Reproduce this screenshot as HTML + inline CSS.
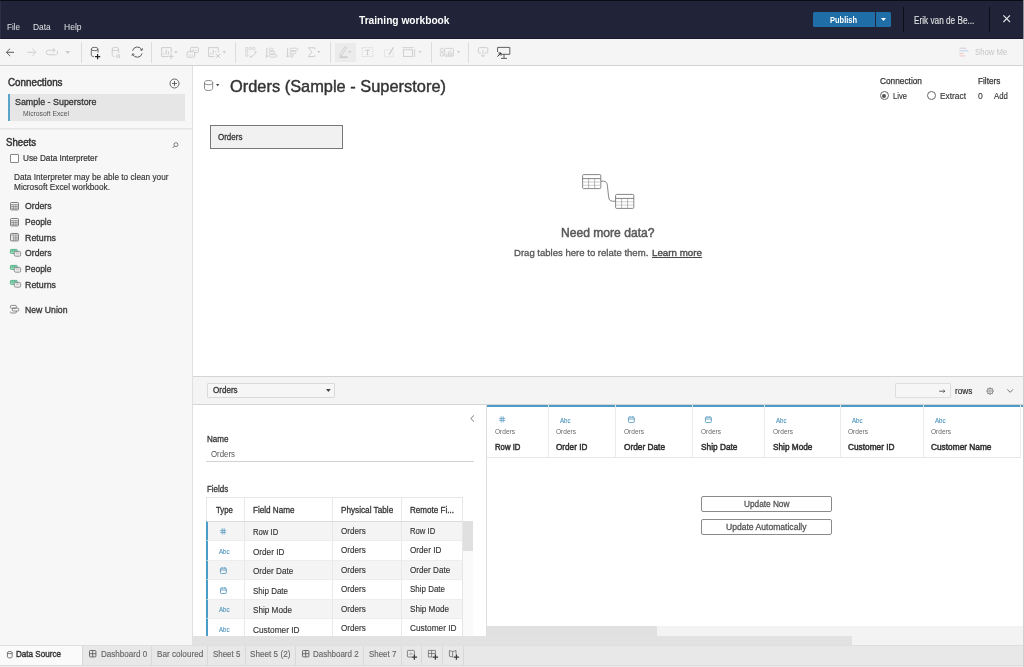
<!DOCTYPE html>
<html lang="en">
<head>
<meta charset="utf-8">
<title>Training workbook</title>
<style>
*{box-sizing:border-box;margin:0;padding:0}
html,body{width:1024px;height:667px;overflow:hidden;background:#fff}
body{font-family:"Liberation Sans",sans-serif;color:#333;font-size:9px;position:relative}
.a{position:absolute}
.t{position:absolute;white-space:nowrap;line-height:1;transform-origin:0 50%}
#txt{position:absolute;left:0;top:0;width:1024px;height:667px;will-change:transform}
svg{position:absolute;overflow:visible}
.sep{position:absolute;width:1px;background:#dcdcdc;top:41.5px;height:21.5px}
.dd{position:absolute;width:0;height:0;border-left:2.2px solid transparent;border-right:2.2px solid transparent;border-top:2.6px solid #c4c4c4}
.tsep{position:absolute;top:646px;width:1px;height:19px;background:#d8d8d8}
.vl{position:absolute;width:1px;background:#e4e4e4}
.hl{position:absolute;height:1px;background:#e4e4e4}
</style>
</head>
<body>
<!-- ===== TOP BAR ===== -->
<div class="a" style="left:0;top:0;width:1024px;height:39px;background:#212438"></div>
<div class="a" style="left:0;top:0;width:1024px;height:1px;background:#0a0b17"></div>
<div class="a" style="left:0;top:38px;width:1024px;height:1px;background:#181a2c"></div>
<div class="a" style="left:0;top:1px;width:1px;height:38px;background:#2d3044"></div>
<div class="a" style="left:812.6px;top:11.8px;width:62.6px;height:15.4px;background:#1f6ea7;border-radius:1.5px 0 0 1.5px"></div>
<div class="a" style="left:876.1px;top:11.8px;width:14.9px;height:15.4px;background:#1f6ea7;border-radius:0 1.5px 1.5px 0"></div>
<svg style="left:881.2px;top:18.4px" width="5" height="3" viewBox="0 0 5 3"><path d="M0 0h5l-2.5 3z" fill="#fff"/></svg>
<div class="a" style="left:903px;top:7px;width:1px;height:25px;background:#0c0d17"></div>
<div class="a" style="left:989px;top:7px;width:1px;height:25px;background:#0c0d17"></div>
<svg style="left:1003px;top:15.3px" width="7.4" height="7.4" viewBox="0 0 7.4 7.4"><path d="M0.4 0.4L7 7M7 0.4L0.4 7" stroke="#e4e4e8" stroke-width="1.1" fill="none"/></svg>

<!-- ===== TOOLBAR ===== -->
<div class="a" style="left:0;top:39px;width:1024px;height:27px;background:#f5f5f5;border-bottom:1px solid #d2d2d2"></div>

<div class="sep" style="left:81px"></div>
<div class="sep" style="left:151px"></div>
<div class="sep" style="left:235px"></div>
<div class="sep" style="left:330px"></div>
<div class="sep" style="left:431px"></div>
<div class="sep" style="left:468px"></div>
<div class="a" style="left:335px;top:42.6px;width:21px;height:19px;background:#ebebeb"></div>
<svg style="left:0;top:0" width="1024" height="70" viewBox="0 0 1024 70" fill="none" stroke-linecap="butt">
 <!-- back / fwd / redo -->
 <path d="M14 52.3H6.6M10.2 48.6L6.4 52.3l3.8 3.7" stroke="#4a4a4a" stroke-width="0.9"/>
 <path d="M27.4 52.3h8.2M32.2 48.6l3.8 3.7-3.8 3.7" stroke="#cbcbcb" stroke-width="0.9"/>
 <path d="M55 50.2h-6.4a2.3 2.3 0 0 0 0 4.6h6.8a2.3 2.3 0 0 0 1.6-3.9M52.8 48l2.4 2.2-2.4 2.2" stroke="#cbcbcb" stroke-width="0.9"/>
 <path d="M65.4 51h4.8l-2.4 3z" fill="#cbcbcb" stroke="none"/>
 <!-- db plus -->
 <path d="M91.3 49v6.2c0 .8 1.2 1.3 2.6 1.4M98 49v3.6" stroke="#555" stroke-width="0.85"/>
 <ellipse cx="94.65" cy="49" rx="3.35" ry="1.7" stroke="#555" stroke-width="0.85"/>
 <path d="M97.6 54v5.2M95 56.6h5.2" stroke="#222" stroke-width="1.2"/>
 <!-- db pause -->
 <path d="M112.2 49v6.2c0 .8 1.2 1.3 2.6 1.4M118.6 49v4" stroke="#cbcbcb" stroke-width="0.9"/>
 <ellipse cx="115.4" cy="49" rx="3.2" ry="1.7" stroke="#cbcbcb" stroke-width="0.9"/>
 <path d="M116.8 54.3v3.8M118.2 54.3v3.8M119.5 54.3v3.8" stroke="#cbcbcb" stroke-width="0.8"/>
 <!-- refresh -->
 <path d="M132.5 50.8a5 5 0 0 1 9.4-.9M142.1 53.4a5 5 0 0 1-9.4.9" stroke="#505050" stroke-width="0.9"/>
 <path d="M142.6 48.4l-.5 1.9-1.9-.5M132 55.8l.5-1.9 1.9.5" stroke="#505050" stroke-width="0.9"/>
 <!-- new worksheet -->
 <path d="M168 56.6h-6.4V47.6h9.6v5.6" stroke="#cbcbcb" stroke-width="0.9"/>
 <path d="M163.8 54.6v-1.8M166.2 54.6v-5M168.4 54.6v-3.4" stroke="#cbcbcb" stroke-width="0.9"/>
 <path d="M171 53.6v5.4M168.3 56.3h5.4" stroke="#cbcbcb" stroke-width="1"/>
 <path d="M174.2 51.3h3.4l-1.7 2.2z" fill="#cbcbcb" stroke="none"/>
 <!-- duplicate -->
 <rect x="190.6" y="47.4" width="7.8" height="5.2" rx="0.8" stroke="#cbcbcb" stroke-width="0.9"/>
 <path d="M193.2 51.4v-2.4M195.8 51.4v-1.6" stroke="#cbcbcb" stroke-width="0.9"/>
 <rect x="187" y="51.8" width="7.6" height="5.4" rx="0.8" stroke="#cbcbcb" stroke-width="0.9" fill="#f5f5f5"/>
 <path d="M189 55.6v-1M190.8 55.6v-1M192.6 55.6v-1" stroke="#cbcbcb" stroke-width="0.9"/>
 <!-- clear -->
 <path d="M214.6 56.6h-6V47.6h9.6v5" stroke="#cbcbcb" stroke-width="0.9"/>
 <path d="M210.8 54.6v-1.8M213.2 54.6v-5M215.4 52v-1" stroke="#cbcbcb" stroke-width="0.9"/>
 <path d="M215.8 53.8l4.4 4.2M220.2 53.8l-4.4 4.2" stroke="#cbcbcb" stroke-width="1"/>
 <path d="M222.6 51.3h3.4l-1.7 2.2z" fill="#cbcbcb" stroke="none"/>
 
 <!-- swap -->
 <rect x="245.5" y="47.5" width="2.3" height="2.1" rx="0.6" stroke="#cbcbcb" stroke-width="0.7"/><rect x="249.1" y="47.5" width="2.3" height="2.1" rx="0.6" stroke="#cbcbcb" stroke-width="0.7"/><rect x="252.7" y="47.5" width="2.3" height="2.1" rx="0.6" stroke="#cbcbcb" stroke-width="0.7"/><rect x="245.5" y="50.7" width="2.3" height="2.1" rx="0.6" stroke="#cbcbcb" stroke-width="0.7"/><rect x="245.5" y="54.2" width="2.3" height="2.1" rx="0.6" stroke="#cbcbcb" stroke-width="0.7"/>
 <path d="M255.6 51.2c0 3-2.4 5.4-5.6 5.6M254.4 52.4l1.2-1.4 1.2 1.4M251.2 55.6l-1.4 1.2 1.4 1.2" stroke="#cbcbcb" stroke-width="0.8"/>
 <!-- sort asc -->
 <path d="M266.8 47.8v9M265.2 55.6l1.6 1.6 1.6-1.6" stroke="#cbcbcb" stroke-width="0.9"/>
 <rect x="269.2" y="48.2" width="3.8" height="2.4" rx="1.2" stroke="#cbcbcb" stroke-width="0.8"/>
 <rect x="269.2" y="51.4" width="5.8" height="2.4" rx="1.2" stroke="#cbcbcb" stroke-width="0.8"/>
 <rect x="269.2" y="54.7" width="7.8" height="2.4" rx="1.2" stroke="#cbcbcb" stroke-width="0.8"/>
 <!-- sort desc -->
 <path d="M287.6 47.8v9M286 55.6l1.6 1.6 1.6-1.6" stroke="#cbcbcb" stroke-width="0.9"/>
 <rect x="290" y="48.2" width="7.8" height="2.4" rx="1.2" stroke="#cbcbcb" stroke-width="0.8"/>
 <rect x="290" y="51.4" width="5.8" height="2.4" rx="1.2" stroke="#cbcbcb" stroke-width="0.8"/>
 <rect x="290" y="54.7" width="3.2" height="2.4" rx="1.2" stroke="#cbcbcb" stroke-width="0.8"/>
 <!-- sigma -->
 <path d="M314.8 49.4V47.8h-6.6l3.8 4.4-3.8 4.4h6.6v-1.6" stroke="#cbcbcb" stroke-width="0.9"/>
 <path d="M317.2 51h3.2l-1.6 2.2z" fill="#cbcbcb" stroke="none"/>
 <!-- highlight pen -->
 <path d="M345 46.6l1.6.8-4.6 7.8-2 .6.4-2z" stroke="#cbcbcb" stroke-width="0.8"/>
 <path d="M339.6 57.1h8" stroke="#b4b4b4" stroke-width="1"/>
 <path d="M348.4 51h3l-1.5 2.2z" fill="#cbcbcb" stroke="none"/>
 <!-- T box -->
 <rect x="362.2" y="47.6" width="10.6" height="9" stroke="#cbcbcb" stroke-width="0.8" stroke-dasharray="1 1"/>
 <path d="M365 50.2h5M367.5 50.2v4.4M366.4 54.6h2.2" stroke="#cbcbcb" stroke-width="0.9"/>
 <!-- annotate -->
 <path d="M389.6 49.8h-5v7h8.6v-4.6" stroke="#cbcbcb" stroke-width="0.8" stroke-dasharray="1 1"/>
 <path d="M393.4 47.4l-3.6 6.2-.6 1.4" stroke="#cbcbcb" stroke-width="1.2"/>
 <!-- fit -->
 <path d="M403.2 47.6h9.6M403.2 47v1.2M412.8 47v1.2" stroke="#cbcbcb" stroke-width="0.8"/>
 <rect x="403.4" y="49.8" width="9.2" height="6.6" stroke="#cbcbcb" stroke-width="0.9"/>
 <path d="M414 49.8h1.2M414 56.4h1.2M414.6 49.8v6.6" stroke="#cbcbcb" stroke-width="0.8"/>
 <path d="M418.4 51h3l-1.5 2.2z" fill="#cbcbcb" stroke="none"/>
 <!-- show cards -->
 <rect x="440.3" y="48.4" width="3" height="3.6" rx="1.2" stroke="#cbcbcb" stroke-width="0.8"/>
 <rect x="440.3" y="52.6" width="3" height="3.6" rx="1.2" stroke="#cbcbcb" stroke-width="0.8"/>
 <rect x="444.6" y="48.4" width="8.8" height="7.8" rx="0.8" stroke="#cbcbcb" stroke-width="0.8"/>
 <path d="M446.6 56v-2.2M448.4 56v-4.4M450.2 56v-5.6M451.8 56v-3.4" stroke="#cbcbcb" stroke-width="0.8"/>
 <path d="M457 51h3l-1.5 2.2z" fill="#cbcbcb" stroke="none"/>
 <!-- download -->
 <path d="M481 53h-1.6a1 1 0 0 1-1-1v-3.4a1 1 0 0 1 1-1h7.4a1 1 0 0 1 1 1V52a1 1 0 0 1-1 1H485" stroke="#cbcbcb" stroke-width="0.9"/>
 <path d="M483 50v6.6M481.4 55.2l1.6 1.6 1.6-1.6" stroke="#cbcbcb" stroke-width="0.9"/>
 <!-- presentation -->
 <path d="M501.6 54.3h8.2V47.4H497.6v4.6" stroke="#505050" stroke-width="0.9"/>
 <path d="M504 54.3v3.8M501 58.4h6" stroke="#4a4a4a" stroke-width="0.9"/>
 <path d="M497.4 56.4l3.4-3.2M498.4 53h2.6v2.6" stroke="#222" stroke-width="1"/>
 <!-- show me -->
 <path d="M959.4 48.3h7" stroke="#d9d3e0" stroke-width="1.3"/>
 <path d="M959.4 50.7h9" stroke="#c9dcea" stroke-width="1.3"/>
 <path d="M959.4 53.5h4.4" stroke="#f3cfcf" stroke-width="1.3"/>
 <path d="M959.4 55.9h5.6" stroke="#f3cfcf" stroke-width="1.3"/>

</svg>


<!-- ===== LEFT PANEL ===== -->
<div class="a" style="left:0;top:66px;width:193px;height:580px;background:#f7f7f7;border-right:1px solid #e0e0e0"></div>

<svg style="left:169px;top:78px" width="11" height="11" viewBox="0 0 11 11"><circle cx="5.5" cy="5.5" r="4.5" fill="none" stroke="#555" stroke-width="0.9"/><path d="M5.5 3v5M3 5.5h5" stroke="#555" stroke-width="0.9"/></svg>
<div class="a" style="left:8px;top:94px;width:177px;height:27px;background:#e6e6e6;border-left:2px solid #5ba3cb"></div>
<div class="a" style="left:0;top:128px;width:192px;height:1px;background:#e6e6e6"></div><div class="a" style="left:0;top:129px;width:192px;height:1px;background:#eeeeee"></div>
<svg style="left:171.8px;top:141.6px" width="6.6" height="6.6" viewBox="0 0 8 8"><circle cx="4.8" cy="3.2" r="2.4" fill="none" stroke="#555" stroke-width="0.9"/><path d="M3 5L0.8 7.2" stroke="#555" stroke-width="1"/></svg>
<div class="a" style="left:9.6px;top:153.6px;width:9.4px;height:9.2px;background:#fff;border:1px solid #868686;border-radius:1px"></div>

<svg style="left:10px;top:202.1px" width="9" height="8.4" viewBox="0 0 9 8.4"><rect x="0.5" y="0.5" width="8" height="7.4" rx="0.9" fill="#f0f0f0" stroke="#707070" stroke-width="0.9"/><path d="M0.5 2.6h8M0.5 4.4h8M0.5 6.2h8M3.3 2.6v5.4M5.9 2.6v5.4" stroke="#808080" stroke-width="0.7" fill="none"/></svg>
<svg style="left:10px;top:217.6px" width="9" height="8.4" viewBox="0 0 9 8.4"><rect x="0.5" y="0.5" width="8" height="7.4" rx="0.9" fill="#f0f0f0" stroke="#707070" stroke-width="0.9"/><path d="M0.5 2.6h8M0.5 4.4h8M0.5 6.2h8M3.3 2.6v5.4M5.9 2.6v5.4" stroke="#808080" stroke-width="0.7" fill="none"/></svg>
<svg style="left:10px;top:233.2px" width="9" height="8.4" viewBox="0 0 9 8.4"><rect x="0.5" y="0.5" width="8" height="7.4" rx="0.9" fill="#f0f0f0" stroke="#707070" stroke-width="0.9"/><path d="M0.5 2h8M3.3 2v6M5.9 2v6M3.3 4.2h5.2M3.3 6h5.2" stroke="#808080" stroke-width="0.7" fill="none"/></svg>
<svg style="left:10px;top:249.1px" width="11.2" height="7.6" viewBox="0 0 11.2 7.6"><rect x="0.4" y="0.4" width="6.8" height="4" rx="0.7" fill="#a6dcc2" stroke="#45ad82" stroke-width="0.8"/><path d="M0.4 2.1h6.8M2.6 0.4v1.7M4.8 0.4v1.7" stroke="#45ad82" stroke-width="0.7"/><rect x="4.3" y="2.4" width="6.4" height="4.8" rx="1.4" fill="#ececec" stroke="#7a7a7a" stroke-width="0.8"/><path d="M6 4.2h3.2" stroke="#999" stroke-width="0.6"/></svg>
<svg style="left:10px;top:264.70000000000005px" width="11.2" height="7.6" viewBox="0 0 11.2 7.6"><rect x="0.4" y="0.4" width="6.8" height="4" rx="0.7" fill="#a6dcc2" stroke="#45ad82" stroke-width="0.8"/><path d="M0.4 2.1h6.8M2.6 0.4v1.7M4.8 0.4v1.7" stroke="#45ad82" stroke-width="0.7"/><rect x="4.3" y="2.4" width="6.4" height="4.8" rx="1.4" fill="#ececec" stroke="#7a7a7a" stroke-width="0.8"/><path d="M6 4.2h3.2" stroke="#999" stroke-width="0.6"/></svg>
<svg style="left:10px;top:280.3px" width="11.2" height="7.6" viewBox="0 0 11.2 7.6"><rect x="0.4" y="0.4" width="6.8" height="4" rx="0.7" fill="#a6dcc2" stroke="#45ad82" stroke-width="0.8"/><path d="M0.4 2.1h6.8M2.6 0.4v1.7M4.8 0.4v1.7" stroke="#45ad82" stroke-width="0.7"/><rect x="4.3" y="2.4" width="6.4" height="4.8" rx="1.4" fill="#ececec" stroke="#7a7a7a" stroke-width="0.8"/><path d="M6 4.2h3.2" stroke="#999" stroke-width="0.6"/></svg>
<svg style="left:10px;top:305.40000000000003px" width="9.2" height="8.4" viewBox="0 0 9.2 8.4"><rect x="0.4" y="0.4" width="6" height="2.8" rx="1" fill="none" stroke="#707070" stroke-width="0.8"/><rect x="2.3" y="3.2" width="6.5" height="2.8" rx="1" fill="none" stroke="#707070" stroke-width="0.8"/><path d="M6.4 6v1.2c0 .5-.4.8-.9.8H1.3c-.5 0-.9-.3-.9-.8V6.6" fill="none" stroke="#707070" stroke-width="0.8"/></svg>

<!-- ===== MAIN ===== -->

<!-- title row -->
<svg style="left:204px;top:80px" width="9.2" height="11" viewBox="0 0 9.2 11"><path d="M0.5 2.6v5.8c0 1.2 1.8 2.1 4.1 2.1s4.1-.9 4.1-2.1V2.6" fill="none" stroke="#7c7c7c" stroke-width="0.9"/><ellipse cx="4.6" cy="2.6" rx="4.1" ry="2.1" fill="none" stroke="#7c7c7c" stroke-width="0.9"/></svg>
<svg style="left:216px;top:84.4px" width="3.4" height="2.2" viewBox="0 0 3.4 2.2"><path d="M0 0h3.4l-1.7 2.2z" fill="#444"/></svg>
<!-- radios -->
<div class="a" style="left:879.6px;top:91px;width:9.2px;height:9.2px;border:1px solid #666;border-radius:50%;background:#fff"></div>
<div class="a" style="left:882.2px;top:93.6px;width:4px;height:4px;border-radius:50%;background:#555"></div>
<div class="a" style="left:927.2px;top:91px;width:9.2px;height:9.2px;border:1px solid #666;border-radius:50%;background:#fff"></div>
<!-- orders box -->
<div class="a" style="left:210px;top:125px;width:132.5px;height:23.6px;background:#f1f1f1;border:1px solid #787878"></div>
<!-- relation icon -->
<svg style="left:582px;top:174px" width="53" height="36" viewBox="0 0 53 36">
 <g fill="none" stroke="#777" stroke-width="0.9">
  <rect x="0.6" y="0.6" width="18.2" height="14" rx="1" fill="#fff"/>
  <path d="M0.6 4.6h18.2" />
  <rect x="33.6" y="20.4" width="18.2" height="14" rx="1" fill="#fff"/>
  <path d="M33.6 24.4h18.2"/>
  <path d="M18.8 7.2h2.6c2.6 0 3.6 1.4 4 4.4l1.2 11.2c.4 3 1.4 4.4 4 4.4h3"/>
 </g>
 <g fill="none" stroke="#b8b8b8" stroke-width="0.7">
  <path d="M0.6 8h18.2M0.6 11.3h18.2"/><path d="M6.6 4.6v10M12.6 4.6v10" stroke="#999"/>
  <path d="M33.6 27.8h18.2M33.6 31.1h18.2"/><path d="M39.6 24.4v10M45.6 24.4v10" stroke="#999"/>
 </g>
</svg>
<!-- lower band -->
<div class="a" style="left:193px;top:376px;width:831px;height:29px;background:#f4f4f4;border-top:1px solid #d4d4d4;border-bottom:1px solid #d4d4d4"></div>
<div class="a" style="left:207.2px;top:383.2px;width:127.5px;height:15.3px;background:#f6f6f6;border:1px solid #dadada;border-radius:1px"></div>
<svg style="left:326px;top:389.2px" width="4.8" height="3" viewBox="0 0 4.8 3"><path d="M0 0h4.8l-2.4 3z" fill="#444"/></svg>
<div class="a" style="left:894.5px;top:383.4px;width:56.3px;height:15px;background:#f6f6f6;border:1px solid #dedede;border-radius:1px"></div>
<svg style="left:938.8px;top:388.9px" width="6.4" height="4.4" viewBox="0 0 6.4 4.4"><path d="M0.2 2.2h5.6M4.4 0.8l1.5 1.4-1.5 1.4" fill="none" stroke="#444" stroke-width="0.85"/></svg>
<svg style="left:986px;top:386.5px" width="8.2" height="8.2" viewBox="0 0 9 9"><circle cx="4.5" cy="4.5" r="3.1" fill="none" stroke="#666" stroke-width="0.8"/><circle cx="4.5" cy="4.5" r="1.3" fill="none" stroke="#666" stroke-width="0.7"/><path d="M4.5 0.4v1M4.5 7.6v1M0.4 4.5h1M7.6 4.5h1M1.6 1.6l.7.7M6.7 6.7l.7.7M1.6 7.4l.7-.7M6.7 2.3l.7-.7" stroke="#666" stroke-width="0.9"/></svg>
<svg style="left:1006.6px;top:388.6px" width="6.4" height="4" viewBox="0 0 6.4 4"><path d="M0.3 0.4l2.9 2.9L6.1 0.4" fill="none" stroke="#555" stroke-width="0.8"/></svg>
<!-- left lower pane -->
<div class="vl" style="left:486px;top:405px;height:231px;background:#dedede"></div>
<svg style="left:470.2px;top:415px" width="4.6" height="7" viewBox="0 0 4.6 7"><path d="M4 0.4L0.8 3.5 4 6.6" fill="none" stroke="#555" stroke-width="0.8"/></svg>
<div class="hl" style="left:206px;top:461px;width:267.5px;background:#d2d2d2"></div>
<div class="a" style="left:206px;top:497px;width:257px;height:139px;border:1px solid #e6e6e6;border-bottom:none;background:#fff"></div>
<div class="a" style="left:206px;top:521px;width:256px;height:19px;background:#f4f4f4;border-left:2px solid #4d9bc7;border-top:1px solid #ededed"></div>
<div class="a" style="left:206px;top:540px;width:256px;height:20px;background:#ffffff;border-left:2px solid #4d9bc7;border-top:1px solid #ededed"></div>
<div class="a" style="left:206px;top:560px;width:256px;height:19px;background:#f4f4f4;border-left:2px solid #4d9bc7;border-top:1px solid #ededed"></div>
<div class="a" style="left:206px;top:579px;width:256px;height:20px;background:#ffffff;border-left:2px solid #4d9bc7;border-top:1px solid #ededed"></div>
<div class="a" style="left:206px;top:599px;width:256px;height:19px;background:#f4f4f4;border-left:2px solid #4d9bc7;border-top:1px solid #ededed"></div>
<div class="a" style="left:206px;top:618px;width:256px;height:18px;background:#ffffff;border-left:2px solid #4d9bc7;border-top:1px solid #ededed"></div>
<div class="vl" style="left:244px;top:498px;height:138px;background:#e9e9e9"></div>
<div class="vl" style="left:332px;top:498px;height:138px;background:#e9e9e9"></div>
<div class="vl" style="left:401px;top:498px;height:138px;background:#e9e9e9"></div>
<div class="hl" style="left:207px;top:520.6px;width:255px;background:#dcdcdc"></div>
<svg style="left:220.10px;top:528.20px" width="6.4" height="6.8" viewBox="0 0 6.4 6.8"><path d="M2.2 0.3v6.2M4.2 0.3v6.2M0.2 2.4h6M0.2 4.4h6" stroke="#4b93bb" stroke-width="0.7" fill="none"/></svg>
<svg style="left:219.90px;top:567.40px" width="6.8" height="7" viewBox="0 0 6.8 7"><rect x="0.45" y="1.1" width="5.9" height="5.4" rx="0.9" fill="none" stroke="#4b93bb" stroke-width="0.8"/><path d="M0.45 3h5.9M2 0.2v1.4M4.8 0.2v1.4" stroke="#4b93bb" stroke-width="0.8" fill="none"/></svg>
<svg style="left:219.90px;top:586.95px" width="6.8" height="7" viewBox="0 0 6.8 7"><rect x="0.45" y="1.1" width="5.9" height="5.4" rx="0.9" fill="none" stroke="#4b93bb" stroke-width="0.8"/><path d="M0.45 3h5.9M2 0.2v1.4M4.8 0.2v1.4" stroke="#4b93bb" stroke-width="0.8" fill="none"/></svg>
<div class="a" style="left:463px;top:521px;width:9.6px;height:115px;background:#fafafa"></div>
<div class="a" style="left:463px;top:521px;width:9.6px;height:29.5px;background:#e0e0e0"></div>

<div class="a" style="left:487px;top:404.5px;width:536px;height:2.2px;background:#4d9bc7"></div>
<div class="hl" style="left:487px;top:457px;width:533px;background:#e6e6e6"></div>
<div class="vl" style="left:548px;top:404.5px;height:53px;background:#ebebeb"></div>
<div class="vl" style="left:615.3px;top:404.5px;height:53px;background:#ebebeb"></div>
<div class="vl" style="left:692.3px;top:404.5px;height:53px;background:#ebebeb"></div>
<div class="vl" style="left:764.3px;top:404.5px;height:53px;background:#ebebeb"></div>
<div class="vl" style="left:840.4px;top:404.5px;height:53px;background:#ebebeb"></div>
<div class="vl" style="left:923px;top:404.5px;height:53px;background:#ebebeb"></div>
<div class="vl" style="left:1020px;top:404.5px;height:53px;background:#ebebeb"></div>
<svg style="left:499.00px;top:416.40px" width="6.4" height="6.8" viewBox="0 0 6.4 6.8"><path d="M2.2 0.3v6.2M4.2 0.3v6.2M0.2 2.4h6M0.2 4.4h6" stroke="#4b93bb" stroke-width="0.7" fill="none"/></svg>
<svg style="left:627.80px;top:416.30px" width="6.8" height="7" viewBox="0 0 6.8 7"><rect x="0.45" y="1.1" width="5.9" height="5.4" rx="0.9" fill="none" stroke="#4b93bb" stroke-width="0.8"/><path d="M0.45 3h5.9M2 0.2v1.4M4.8 0.2v1.4" stroke="#4b93bb" stroke-width="0.8" fill="none"/></svg>
<svg style="left:704.80px;top:416.30px" width="6.8" height="7" viewBox="0 0 6.8 7"><rect x="0.45" y="1.1" width="5.9" height="5.4" rx="0.9" fill="none" stroke="#4b93bb" stroke-width="0.8"/><path d="M0.45 3h5.9M2 0.2v1.4M4.8 0.2v1.4" stroke="#4b93bb" stroke-width="0.8" fill="none"/></svg>

<!-- buttons -->
<div class="a" style="left:701px;top:496.2px;width:130.6px;height:15.5px;border:1px solid #8a8a8a;border-radius:2px;background:#fff"></div>
<div class="a" style="left:701px;top:519.4px;width:130.6px;height:15.5px;border:1px solid #8a8a8a;border-radius:2px;background:#fff"></div>
<!-- scrollbars -->
<div class="a" style="left:487px;top:626px;width:537px;height:10px;background:#f3f3f3"></div>
<div class="a" style="left:487px;top:626px;width:170px;height:10px;background:#e1e1e1"></div>
<div class="a" style="left:193px;top:636px;width:831px;height:10px;background:#f3f3f3"></div>
<div class="a" style="left:193px;top:636px;width:659px;height:10px;background:#e2e2e2"></div>


<!-- ===== TABS ===== -->

<div class="a" style="left:0;top:645px;width:1024px;height:22px;background:#e8e8e8;border-top:1px solid #dfdfdf"></div>
<div class="a" style="left:0;top:665px;width:1024px;height:2px;background:#ececec;border-top:1px solid #dcdcdc"></div>
<div class="a" style="left:0;top:646px;width:82px;height:19px;background:#fafafa"></div>
<svg style="left:7px;top:651px" width="5.6" height="7.4" viewBox="0 0 5.6 7.4"><path d="M0.45 1.6v4.2c0 .7 1 1.1 2.35 1.1s2.35-.4 2.35-1.1V1.6" fill="none" stroke="#555" stroke-width="0.8"/><ellipse cx="2.8" cy="1.6" rx="2.35" ry="1.1" fill="none" stroke="#555" stroke-width="0.8"/></svg>
<div class="tsep" style="left:82px"></div>
<div class="tsep" style="left:151px"></div>
<div class="tsep" style="left:207px"></div>
<div class="tsep" style="left:245px"></div>
<div class="tsep" style="left:295px"></div>
<div class="tsep" style="left:363px"></div>
<div class="tsep" style="left:401px"></div>
<div class="tsep" style="left:421px"></div>
<div class="tsep" style="left:442px"></div>
<div class="tsep" style="left:463px"></div>
<svg style="left:89px;top:650px" width="7.4" height="7.4" viewBox="0 0 7.4 7.4"><rect x="0.5" y="0.5" width="6.4" height="6.4" rx="0.8" fill="none" stroke="#5e5e5e" stroke-width="0.9"/><path d="M3.7 0.5v6.4M0.5 3.7h6.4" stroke="#5e5e5e" stroke-width="0.9"/></svg>
<svg style="left:301.6px;top:650px" width="7.4" height="7.4" viewBox="0 0 7.4 7.4"><rect x="0.5" y="0.5" width="6.4" height="6.4" rx="0.8" fill="none" stroke="#5e5e5e" stroke-width="0.9"/><path d="M3.7 0.5v6.4M0.5 3.7h6.4" stroke="#5e5e5e" stroke-width="0.9"/></svg>
<svg style="left:407px;top:650px" width="11" height="11" viewBox="0 0 11 11"><path d="M4.4 7H1.2a.8.8 0 0 1-.8-.8V1.2a.8.8 0 0 1 .8-.8h5.4a.8.8 0 0 1 .8.8v2.6" fill="none" stroke="#6a6a6a" stroke-width="0.8"/><path d="M2.6 4.8V3.8M3.8 4.8V2.4M5 4.8V3.2" stroke="#8a8a8a" stroke-width="0.7"/><path d="M7.4 4.3v5.4M4.7 7h5.4" stroke="#3a3a3a" stroke-width="1.25" fill="none"/></svg>
<svg style="left:428.2px;top:650px" width="11" height="11" viewBox="0 0 11 11"><path d="M4.4 7H0.4V0.4h7v3.4M3.6 0.4V7M0.4 3.5h7" fill="none" stroke="#6a6a6a" stroke-width="0.8"/><path d="M7.4 4.3v5.4M4.7 7h5.4" stroke="#3a3a3a" stroke-width="1.25" fill="none"/></svg>
<svg style="left:448.8px;top:650px" width="11" height="11" viewBox="0 0 11 11"><path d="M0.4 0.6l3.2.9v5.6l-3.2-.9zM3.6 1.5l3.4-.9v3" fill="none" stroke="#6a6a6a" stroke-width="0.8"/><path d="M7.4 4.3v5.4M4.7 7h5.4" stroke="#3a3a3a" stroke-width="1.25" fill="none"/></svg>
<div class="a" style="left:1023px;top:0;width:1px;height:39px;background:#8c8e99"></div>
<div class="a" style="left:1023px;top:39px;width:1px;height:628px;background:#d0d0d0"></div>

<!-- TEXT -->
<div id="txt">
<div class="t" style="left:6.50px;top:23px;font-size:9.2px;color:#e0e0e4;transform:scaleX(0.8844);">File</div>
<div class="t" style="left:33.00px;top:23px;font-size:9.2px;color:#e0e0e4;transform:scaleX(0.9165);">Data</div>
<div class="t" style="left:64.20px;top:23px;font-size:9.2px;color:#e0e0e4;transform:scaleX(0.9309);">Help</div>
<div class="t" style="left:358.50px;top:15px;font-size:10.5px;color:#fff;transform:scaleX(0.9695);font-weight:bold;">Training workbook</div>
<div class="t" style="left:830.20px;top:16px;font-size:9px;color:#fff;transform:scaleX(0.8334);font-weight:bold;">Publish</div>
<div class="t" style="left:914.20px;top:16px;font-size:10px;color:#e2e2e4;-webkit-text-stroke:0.1px #e2e2e4;transform:scaleX(0.8232);">Erik van de Be...</div>
<div class="t" style="left:974.60px;top:48px;font-size:9px;color:#c6c6c6;transform:scaleX(0.8633);">Show Me</div>
<div class="t" style="left:8.00px;top:78px;font-size:10px;color:#333;-webkit-text-stroke:0.45px #333;transform:scaleX(0.9803);">Connections</div>
<div class="t" style="left:15.00px;top:97px;font-size:9.5px;color:#333;-webkit-text-stroke:0.3px #333;transform:scaleX(0.9354);">Sample - Superstore</div>
<div class="t" style="left:23.00px;top:110px;font-size:7.6px;color:#555;transform:scaleX(0.8935);">Microsoft Excel</div>
<div class="t" style="left:5.80px;top:138px;font-size:10px;color:#333;-webkit-text-stroke:0.45px #333;transform:scaleX(0.9634);">Sheets</div>
<div class="t" style="left:22.90px;top:154px;font-size:9px;color:#333;-webkit-text-stroke:0.2px #333;transform:scaleX(0.9124);">Use Data Interpreter</div>
<div class="t" style="left:13.50px;top:173px;font-size:9px;color:#333;-webkit-text-stroke:0.15px #333;transform:scaleX(0.9164);">Data Interpreter may be able to clean your</div>
<div class="t" style="left:13.50px;top:183px;font-size:9px;color:#333;-webkit-text-stroke:0.15px #333;transform:scaleX(0.9182);">Microsoft Excel workbook.</div>
<div class="t" style="left:24.80px;top:201px;font-size:9.5px;color:#333;-webkit-text-stroke:0.3px #333;transform:scaleX(0.9123);">Orders</div>
<div class="t" style="left:24.80px;top:217px;font-size:9.5px;color:#333;-webkit-text-stroke:0.3px #333;transform:scaleX(0.8955);">People</div>
<div class="t" style="left:24.80px;top:233px;font-size:9.5px;color:#333;-webkit-text-stroke:0.3px #333;transform:scaleX(0.9319);">Returns</div>
<div class="t" style="left:24.80px;top:248px;font-size:9.5px;color:#333;-webkit-text-stroke:0.3px #333;transform:scaleX(0.9123);">Orders</div>
<div class="t" style="left:24.80px;top:264px;font-size:9.5px;color:#333;-webkit-text-stroke:0.3px #333;transform:scaleX(0.8955);">People</div>
<div class="t" style="left:24.80px;top:280px;font-size:9.5px;color:#333;-webkit-text-stroke:0.3px #333;transform:scaleX(0.9319);">Returns</div>
<div class="t" style="left:24.80px;top:305px;font-size:9.5px;color:#333;-webkit-text-stroke:0.3px #333;transform:scaleX(0.9146);">New Union</div>
<div class="t" style="left:230.00px;top:78px;font-size:16.2px;color:#333;-webkit-text-stroke:0.4px #333;transform:scaleX(1.0130);">Orders (Sample - Superstore)</div>
<div class="t" style="left:879.60px;top:77px;font-size:9px;color:#333;-webkit-text-stroke:0.25px #333;transform:scaleX(0.9221);">Connection</div>
<div class="t" style="left:893.00px;top:92px;font-size:9px;color:#333;-webkit-text-stroke:0.15px #333;transform:scaleX(0.8477);">Live</div>
<div class="t" style="left:940.00px;top:92px;font-size:9px;color:#333;-webkit-text-stroke:0.15px #333;transform:scaleX(0.9281);">Extract</div>
<div class="t" style="left:978.40px;top:77px;font-size:9px;color:#333;-webkit-text-stroke:0.25px #333;transform:scaleX(0.9143);">Filters</div>
<div class="t" style="left:978.40px;top:92px;font-size:9px;color:#333;-webkit-text-stroke:0.1px #333;transform:scaleX(0.9570);">0</div>
<div class="t" style="left:994.00px;top:92px;font-size:9px;color:#333;-webkit-text-stroke:0.15px #333;transform:scaleX(0.8617);">Add</div>
<div class="t" style="left:217.60px;top:133px;font-size:8.8px;color:#333;-webkit-text-stroke:0.3px #333;transform:scaleX(0.9074);">Orders</div>
<div class="t" style="left:561.20px;top:227px;font-size:12.2px;color:#5a5a5a;-webkit-text-stroke:0.5px #5a5a5a;transform:scaleX(0.9927);">Need more data?</div>
<div class="t" style="left:514.20px;top:248px;font-size:9.8px;color:#555;-webkit-text-stroke:0.3px #555;transform:scaleX(0.9747);">Drag tables here to relate them.</div>
<div class="t" style="left:651.90px;top:248px;font-size:9.8px;color:#4a4a4a;-webkit-text-stroke:0.35px #4a4a4a;transform:scaleX(0.9978);text-decoration:underline;text-underline-offset:0.6px;text-decoration-thickness:0.7px;">Learn more</div>
<div class="t" style="left:212.70px;top:386px;font-size:8.6px;color:#333;-webkit-text-stroke:0.3px #333;transform:scaleX(0.9366);">Orders</div>
<div class="t" style="left:955.00px;top:387px;font-size:9px;color:#333;-webkit-text-stroke:0.2px #333;transform:scaleX(0.9150);">rows</div>
<div class="t" style="left:206.60px;top:435px;font-size:9px;color:#333;-webkit-text-stroke:0.3px #333;transform:scaleX(0.8953);">Name</div>
<div class="t" style="left:211.00px;top:450px;font-size:9px;color:#555;transform:scaleX(0.8722);">Orders</div>
<div class="t" style="left:206.60px;top:485px;font-size:9px;color:#333;-webkit-text-stroke:0.3px #333;transform:scaleX(0.8828);">Fields</div>
<div class="t" style="left:216.30px;top:506px;font-size:9px;color:#333;-webkit-text-stroke:0.3px #333;transform:scaleX(0.8608);">Type</div>
<div class="t" style="left:253.00px;top:506px;font-size:9px;color:#333;-webkit-text-stroke:0.3px #333;transform:scaleX(0.9019);">Field Name</div>
<div class="t" style="left:340.80px;top:506px;font-size:9px;color:#333;-webkit-text-stroke:0.3px #333;transform:scaleX(0.9098);">Physical Table</div>
<div class="t" style="left:409.70px;top:506px;font-size:9px;color:#333;-webkit-text-stroke:0.3px #333;transform:scaleX(0.8977);">Remote Fi...</div>
<div class="t" style="left:253.00px;top:528px;font-size:9px;color:#333;-webkit-text-stroke:0.15px #333;transform:scaleX(0.8572);">Row ID</div>
<div class="t" style="left:340.80px;top:527px;font-size:9px;color:#333;-webkit-text-stroke:0.15px #333;transform:scaleX(0.8977);">Orders</div>
<div class="t" style="left:409.70px;top:527px;font-size:9px;color:#333;-webkit-text-stroke:0.15px #333;transform:scaleX(0.8572);">Row ID</div>
<div class="t" style="left:253.00px;top:548px;font-size:9px;color:#333;-webkit-text-stroke:0.15px #333;transform:scaleX(0.9068);">Order ID</div>
<div class="t" style="left:340.80px;top:546px;font-size:9px;color:#333;-webkit-text-stroke:0.15px #333;transform:scaleX(0.8977);">Orders</div>
<div class="t" style="left:409.70px;top:546px;font-size:9px;color:#333;-webkit-text-stroke:0.15px #333;transform:scaleX(0.9068);">Order ID</div>
<div class="t" style="left:218.70px;top:549px;font-size:6.6px;color:#4b93bb;-webkit-text-stroke:0.1px #4b93bb;transform:scaleX(0.9319);">Abc</div>
<div class="t" style="left:253.00px;top:567px;font-size:9px;color:#333;-webkit-text-stroke:0.15px #333;transform:scaleX(0.9027);">Order Date</div>
<div class="t" style="left:340.80px;top:566px;font-size:9px;color:#333;-webkit-text-stroke:0.15px #333;transform:scaleX(0.8977);">Orders</div>
<div class="t" style="left:409.70px;top:566px;font-size:9px;color:#333;-webkit-text-stroke:0.15px #333;transform:scaleX(0.9027);">Order Date</div>
<div class="t" style="left:253.00px;top:587px;font-size:9px;color:#333;-webkit-text-stroke:0.15px #333;transform:scaleX(0.8854);">Ship Date</div>
<div class="t" style="left:340.80px;top:585px;font-size:9px;color:#333;-webkit-text-stroke:0.15px #333;transform:scaleX(0.8977);">Orders</div>
<div class="t" style="left:409.70px;top:585px;font-size:9px;color:#333;-webkit-text-stroke:0.15px #333;transform:scaleX(0.8854);">Ship Date</div>
<div class="t" style="left:253.00px;top:606px;font-size:9px;color:#333;-webkit-text-stroke:0.15px #333;transform:scaleX(0.9063);">Ship Mode</div>
<div class="t" style="left:340.80px;top:605px;font-size:9px;color:#333;-webkit-text-stroke:0.15px #333;transform:scaleX(0.8977);">Orders</div>
<div class="t" style="left:409.70px;top:605px;font-size:9px;color:#333;-webkit-text-stroke:0.15px #333;transform:scaleX(0.9063);">Ship Mode</div>
<div class="t" style="left:218.70px;top:607px;font-size:6.6px;color:#4b93bb;-webkit-text-stroke:0.1px #4b93bb;transform:scaleX(0.9319);">Abc</div>
<div class="t" style="left:253.00px;top:626px;font-size:9px;color:#333;-webkit-text-stroke:0.15px #333;transform:scaleX(0.9205);">Customer ID</div>
<div class="t" style="left:340.80px;top:624px;font-size:9px;color:#333;-webkit-text-stroke:0.15px #333;transform:scaleX(0.8977);">Orders</div>
<div class="t" style="left:409.70px;top:624px;font-size:9px;color:#333;-webkit-text-stroke:0.15px #333;transform:scaleX(0.9205);">Customer ID</div>
<div class="t" style="left:218.70px;top:627px;font-size:6.6px;color:#4b93bb;-webkit-text-stroke:0.1px #4b93bb;transform:scaleX(0.9319);">Abc</div>
<div class="t" style="left:494.60px;top:428px;font-size:7.6px;color:#666;transform:scaleX(0.8614);">Orders</div>
<div class="t" style="left:494.60px;top:442px;font-size:9.4px;color:#2e2e2e;-webkit-text-stroke:0.5px #2e2e2e;transform:scaleX(0.8264);">Row ID</div>
<div class="t" style="left:556.20px;top:428px;font-size:7.6px;color:#666;transform:scaleX(0.8614);">Orders</div>
<div class="t" style="left:556.20px;top:442px;font-size:9.4px;color:#2e2e2e;-webkit-text-stroke:0.5px #2e2e2e;transform:scaleX(0.8706);">Order ID</div>
<div class="t" style="left:559.60px;top:418px;font-size:6.6px;color:#4b93bb;-webkit-text-stroke:0.1px #4b93bb;transform:scaleX(0.9319);">Abc</div>
<div class="t" style="left:623.60px;top:428px;font-size:7.6px;color:#666;transform:scaleX(0.8614);">Orders</div>
<div class="t" style="left:623.60px;top:442px;font-size:9.4px;color:#2e2e2e;-webkit-text-stroke:0.5px #2e2e2e;transform:scaleX(0.8841);">Order Date</div>
<div class="t" style="left:700.60px;top:428px;font-size:7.6px;color:#666;transform:scaleX(0.8614);">Orders</div>
<div class="t" style="left:700.60px;top:442px;font-size:9.4px;color:#2e2e2e;-webkit-text-stroke:0.5px #2e2e2e;transform:scaleX(0.8841);">Ship Date</div>
<div class="t" style="left:772.70px;top:428px;font-size:7.6px;color:#666;transform:scaleX(0.8614);">Orders</div>
<div class="t" style="left:772.70px;top:442px;font-size:9.4px;color:#2e2e2e;-webkit-text-stroke:0.5px #2e2e2e;transform:scaleX(0.8789);">Ship Mode</div>
<div class="t" style="left:776.10px;top:418px;font-size:6.6px;color:#4b93bb;-webkit-text-stroke:0.1px #4b93bb;transform:scaleX(0.9319);">Abc</div>
<div class="t" style="left:848.20px;top:428px;font-size:7.6px;color:#666;transform:scaleX(0.8614);">Orders</div>
<div class="t" style="left:848.20px;top:442px;font-size:9.4px;color:#2e2e2e;-webkit-text-stroke:0.5px #2e2e2e;transform:scaleX(0.8836);">Customer ID</div>
<div class="t" style="left:851.60px;top:418px;font-size:6.6px;color:#4b93bb;-webkit-text-stroke:0.1px #4b93bb;transform:scaleX(0.9319);">Abc</div>
<div class="t" style="left:931.30px;top:428px;font-size:7.6px;color:#666;transform:scaleX(0.8614);">Orders</div>
<div class="t" style="left:931.30px;top:442px;font-size:9.4px;color:#2e2e2e;-webkit-text-stroke:0.5px #2e2e2e;transform:scaleX(0.8864);">Customer Name</div>
<div class="t" style="left:934.70px;top:418px;font-size:6.6px;color:#4b93bb;-webkit-text-stroke:0.1px #4b93bb;transform:scaleX(0.9319);">Abc</div>
<div class="t" style="left:743.60px;top:500px;font-size:9px;color:#555;-webkit-text-stroke:0.3px #555;transform:scaleX(0.9166);">Update Now</div>
<div class="t" style="left:725.70px;top:523px;font-size:9px;color:#555;-webkit-text-stroke:0.3px #555;transform:scaleX(0.9521);">Update Automatically</div>
<div class="t" style="left:16.40px;top:650px;font-size:9px;color:#333;-webkit-text-stroke:0.4px #333;transform:scaleX(0.8994);">Data Source</div>
<div class="t" style="left:100.80px;top:650px;font-size:9px;color:#666;-webkit-text-stroke:0.15px #666;transform:scaleX(0.8963);">Dashboard 0</div>
<div class="t" style="left:156.50px;top:650px;font-size:9px;color:#666;-webkit-text-stroke:0.15px #666;transform:scaleX(0.9053);">Bar coloured</div>
<div class="t" style="left:212.90px;top:650px;font-size:9px;color:#666;-webkit-text-stroke:0.15px #666;transform:scaleX(0.8798);">Sheet 5</div>
<div class="t" style="left:249.80px;top:650px;font-size:9px;color:#666;-webkit-text-stroke:0.15px #666;transform:scaleX(0.9072);">Sheet 5 (2)</div>
<div class="t" style="left:313.00px;top:650px;font-size:9px;color:#666;-webkit-text-stroke:0.15px #666;transform:scaleX(0.8846);">Dashboard 2</div>
<div class="t" style="left:368.70px;top:650px;font-size:9px;color:#666;-webkit-text-stroke:0.15px #666;transform:scaleX(0.8798);">Sheet 7</div>
</div>
</body>
</html>
